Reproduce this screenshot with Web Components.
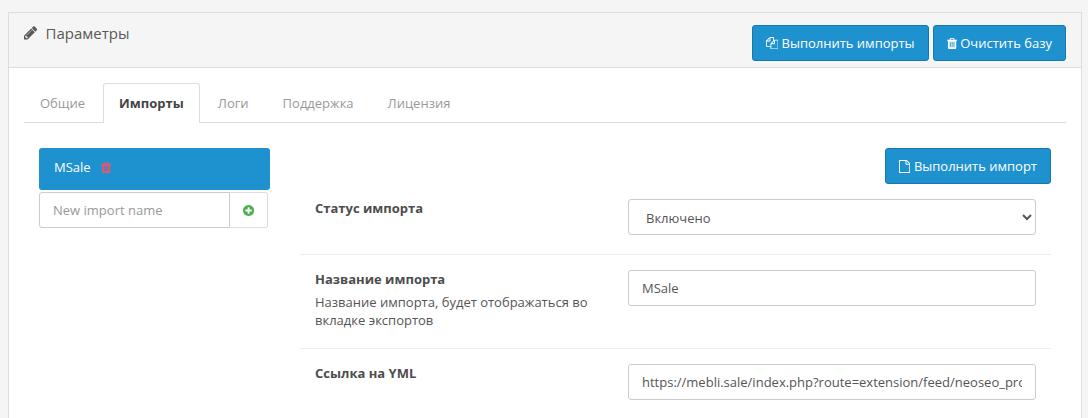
<!DOCTYPE html>
<html>
<head>
<meta charset="utf-8">
<style>
  html, body { margin: 0; height: 418px; overflow: hidden; background: #f5f5f5; }
  body { padding: 12px 6px 0 8px; font: 13px/18px "Open Sans", sans-serif; color: #555; box-sizing: border-box; }
</style>
</head>
<body>
<settings-panel>
  <fa-icon slot="icon" name="pencil" size="15.5"></fa-icon>
  <span slot="title">Параметры</span>
  <action-button slot="actions" icon="files" size="12.5">Выполнить импорты</action-button>
  <action-button slot="actions" icon="trash">Очистить базу</action-button>

  <tab-bar>
    <tab-item>Общие</tab-item>
    <tab-item active>Импорты</tab-item>
    <tab-item>Логи</tab-item>
    <tab-item>Поддержка</tab-item>
    <tab-item>Лицензия</tab-item>
  </tab-bar>

  <import-layout>
    <import-item slot="side">MSale</import-item>
    <new-import slot="side"></new-import>

    <action-button class="run" icon="file">Выполнить импорт</action-button>

    <form-row label="Статус импорта">
      <select-box>Включено</select-box>
    </form-row>
    <form-row label="Название импорта" help="Название импорта, будет отображаться во вкладке экспортов">
      <text-box>MSale</text-box>
    </form-row>
    <form-row label="Ссылка на YML" last>
      <text-box>https://mebli.sale/index.php?route=extension/feed/neoseo_pro</text-box>
    </form-row>
  </import-layout>
</settings-panel>

<script>
// x offset, width and path of each glyph, in a 1792 unit em
const ICONS = {
  pencil: [128, 1515, "M491 1536l91-91-235-235-91 91v107h128v128h107zm523-928q0-22-22-22-10 0-17 7l-542 542q-7 7-7 17 0 22 22 22 10 0 17-7l542-542q7-7 7-17zm-54-192l416 416-832 832h-416v-416zm683 96q0 53-37 90l-166 166-416-416 166-165q36-38 90-38 53 0 91 38l235 234q37 39 37 91z"],
  files: [0, 1792, "M1696 384q40 0 68 28t28 68v1216q0 40-28 68t-68 28h-960q-40 0-68-28t-28-68v-288h-544q-40 0-68-28t-28-68v-672q0-40 20-88t48-76l408-408q28-28 76-48t88-20h416q40 0 68 28t28 68v328q68-40 128-40h416zm-544 213l-299 299h299v-299zm-640-384l-299 299h299v-299zm196 647l316-316v-416h-384v416q0 40-28 68t-68 28h-416v640h512v-256q0-40 20-88t48-76zm956 804v-1152h-384v416q0 40-28 68t-68 28h-416v640h896z"],
  trash: [192, 1408, "M704 1376v-704q0-14-9-23t-23-9h-64q-14 0-23 9t-9 23v704q0 14 9 23t23 9h64q14 0 23-9t9-23zm256 0v-704q0-14-9-23t-23-9h-64q-14 0-23 9t-9 23v704q0 14 9 23t23 9h64q14 0 23-9t9-23zm256 0v-704q0-14-9-23t-23-9h-64q-14 0-23 9t-9 23v704q0 14 9 23t23 9h64q14 0 23-9t9-23zm-544-992h448l-48-117q-7-9-17-11h-317q-10 2-17 11zm928 32v64q0 14-9 23t-23 9h-96v948q0 83-47 143.500t-113 60.500h-832q-66 0-113-58.500t-47-141.500v-952h-96q-14 0-23-9t-9-23v-64q0-14 9-23t23-9h309l70-167q15-37 54-63t79-26h320q40 0 79 26t54 63l70 167h309q14 0 23 9t9 23z"],
  file: [128, 1536, "M1596 380q28 28 48 76t20 88v1152q0 40-28 68t-68 28h-1344q-40 0-68-28t-28-68v-1600q0-40 28-68t68-28h896q40 0 88 20t76 48zm-444-244v376h376q-10-29-22-41l-313-313q-12-12-41-22zm384 1528v-1024h-416q-40 0-68-28t-28-68v-416h-768v1536h1280z"],
  plus: [128, 1536, "M1344 960v-128q0-26-19-45t-45-19h-256v-256q0-26-19-45t-45-19h-128q-26 0-45 19t-19 45v256h-256q-26 0-45 19t-19 45v128q0 26 19 45t45 19h256v256q0 26 19 45t45 19h128q26 0 45-19t19-45v-256h256q26 0 45-19t19-45zm320-64q0 209-103 385.500t-279.500 279.500-385.500 103-385.500-103-279.500-279.500-103-385.500 103-385.500 279.500-279.500 385.500-103 385.500 103 279.500 279.500 103 385.500z"]
};

class FaIcon extends HTMLElement {
  connectedCallback() {
    const size = +this.getAttribute("size") || 13;
    const [x, w, d] = ICONS[this.getAttribute("name")];
    this.attachShadow({mode: "open"}).innerHTML = `
      <style>:host { display: inline-flex; flex: none; } svg { display: block; }</style>
      <svg width="${size * w / 1792}" height="${size}" viewBox="${x} 0 ${w} 1792"><path fill="currentColor" d="${d}"/></svg>`;
  }
}
customElements.define("fa-icon", FaIcon);

class SettingsPanel extends HTMLElement {
  constructor() {
    super();
    this.attachShadow({mode: "open"}).innerHTML = `
      <style>
        :host { display: block; border: 1px solid #ddd; border-bottom: 0; height: 406px; box-sizing: border-box; background: #fff; }
        header { display: flex; justify-content: space-between; height: 55px; box-sizing: border-box;
                 background: #f5f5f5; border-bottom: 1px solid #ddd; padding: 12px 15px 0; }
        h3 { margin: -2px 0 0; display: flex; align-items: center; align-self: flex-start; gap: 8.5px; font: 400 15px/20px "Open Sans", sans-serif; color: #595959; }
        ::slotted([slot="icon"]) { color: #595959; }
        .actions { display: flex; gap: 4px; }
        main { padding: 15px 15px 0; }
      </style>
      <header>
        <h3><slot name="icon"></slot><slot name="title"></slot></h3>
        <div class="actions"><slot name="actions"></slot></div>
      </header>
      <main><slot></slot></main>`;
  }
}
customElements.define("settings-panel", SettingsPanel);

class ActionButton extends HTMLElement {
  connectedCallback() {
    const icon = this.getAttribute("icon");
    const size = this.getAttribute("size") || 13;
    this.attachShadow({mode: "open"}).innerHTML = `
      <style>
        :host { display: inline-flex; align-items: center; gap: 3.4px; height: 36px; box-sizing: border-box; padding: 0 13px;
                background: #1e91cf; border: 1px solid #1978ab; border-radius: 3px; color: #fff;
                font: 13px/18px "Open Sans", sans-serif; white-space: nowrap; }
      </style>
      <fa-icon name="${icon}" size="${size}"></fa-icon><slot></slot>`;
  }
}
customElements.define("action-button", ActionButton);

class TabBar extends HTMLElement {
  constructor() {
    super();
    this.attachShadow({mode: "open"}).innerHTML = `
      <style>:host { display: flex; border-bottom: 1px solid #ddd; height: 40px; box-sizing: border-box; }</style>
      <slot></slot>`;
  }
}
customElements.define("tab-bar", TabBar);

class TabItem extends HTMLElement {
  constructor() {
    super();
    this.attachShadow({mode: "open"}).innerHTML = `
      <style>
        :host { display: block; height: 40px; box-sizing: border-box; padding: 10px 15px; color: #999; border: 1px solid transparent; border-bottom: 0; margin-right: 2px;
                border-radius: 3px 3px 0 0; }
        :host([active]) { color: #444; font-weight: 700; background: #fff; border-color: #ddd; }
      </style>
      <slot></slot>`;
  }
}
customElements.define("tab-item", TabItem);

class ImportLayout extends HTMLElement {
  constructor() {
    super();
    this.attachShadow({mode: "open"}).innerHTML = `
      <style>
        :host { display: grid; grid-template-columns: 231px 1fr; column-gap: 30px; padding: 25px 15px 0; }
        .side { display: flex; flex-direction: column; gap: 2px; }
        .content { display: flex; flex-direction: column; min-width: 0; }
        ::slotted(.run) { align-self: flex-end; }
      </style>
      <div class="side"><slot name="side"></slot></div>
      <div class="content"><slot></slot></div>`;
  }
}
customElements.define("import-layout", ImportLayout);

class ImportItem extends HTMLElement {
  constructor() {
    super();
    this.attachShadow({mode: "open"}).innerHTML = `
      <style>
        :host { display: flex; align-items: center; gap: 10px; height: 42px; box-sizing: border-box; padding: 0 15px 4px;
                background: #1e91cf; border-radius: 3px; color: #fff; }
        fa-icon { color: #e3586e; }
      </style>
      <slot></slot><fa-icon name="trash" size="13"></fa-icon>`;
  }
}
customElements.define("import-item", ImportItem);

class NewImport extends HTMLElement {
  constructor() {
    super();
    this.attachShadow({mode: "open"}).innerHTML = `
      <style>
        :host { display: flex; width: 229px; height: 36px; box-sizing: border-box; }
        .name { flex: 1; border: 1px solid #ccc; border-radius: 3px 0 0 3px; padding: 0 13px; line-height: 34px; color: #999; }
        .add { width: 38px; box-sizing: border-box; border: 1px solid #ddd; border-left: 0; border-radius: 0 3px 3px 0;
               display: flex; align-items: center; justify-content: center; color: #4cae4c; }
      </style>
      <div class="name">New import name</div>
      <div class="add"><fa-icon name="plus" size="13"></fa-icon></div>`;
  }
}
customElements.define("new-import", NewImport);

class FormRow extends HTMLElement {
  connectedCallback() {
    const help = this.getAttribute("help");
    this.attachShadow({mode: "open"}).innerHTML = `
      <style>
        :host { display: grid; grid-template-columns: 313px 408px; padding: 15px 15px 19px; border-bottom: 1px solid #eee; }
        :host([last]) { border-bottom: 0; }
        b { display: block; font-weight: 700; color: #4d4d4d; line-height: 18px; }
        p { margin: 5px 0 0; width: 285px; line-height: 18px; color: #555; }
      </style>
      <div><b>${this.getAttribute("label")}</b>${help ? `<p>${help}</p>` : ""}</div>
      <div><slot></slot></div>`;
  }
}
customElements.define("form-row", FormRow);

class TextBox extends HTMLElement {
  constructor() {
    super();
    this.attachShadow({mode: "open"}).innerHTML = `
      <style>
        :host { display: block; height: 36px; box-sizing: border-box; border: 1px solid #ccc; border-radius: 3px; padding: 0 13px; color: #555; }
        div { line-height: 34px; white-space: nowrap; overflow: hidden; }
      </style>
      <div><slot></slot></div>`;
  }
}
customElements.define("text-box", TextBox);

class SelectBox extends HTMLElement {
  connectedCallback() {
    this.attachShadow({mode: "open"}).innerHTML = `
      <style>
        :host { display: block; }
        select { display: block; width: 100%; height: 36px; box-sizing: border-box; border: 1px solid #ccc; border-radius: 3px;
                 padding: 1px 13px 0; background: #fff; color: #555; font: 13px "Open Sans", sans-serif; outline: 0; }
      </style>
      <select><option>${this.textContent}</option></select>`;
  }
}
customElements.define("select-box", SelectBox);
</script>
</body>
</html>
